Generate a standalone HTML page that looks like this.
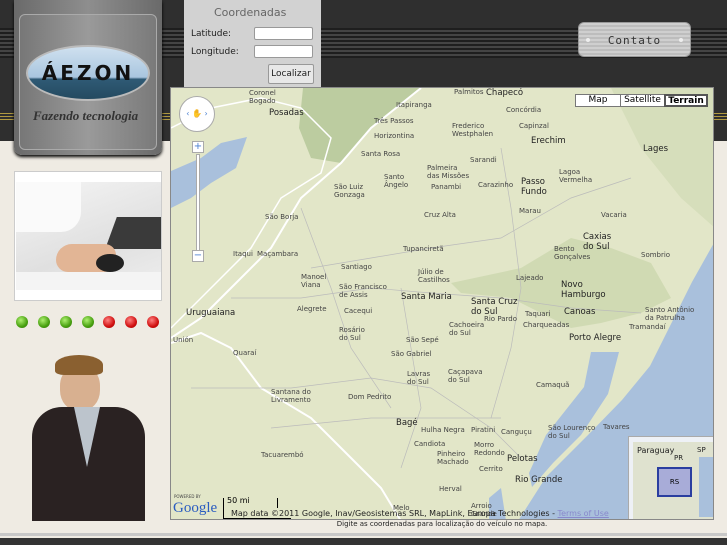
<!DOCTYPE html>
<html><head><meta charset="utf-8"><style>
*{margin:0;padding:0;box-sizing:border-box}
body{width:727px;height:545px;overflow:hidden;position:relative;background:#efebe3;font-family:"DejaVu Sans","Liberation Sans",sans-serif}
.hdr{position:absolute;left:0;top:0;width:727px;height:141px;background:#2f2f2f}
.stripe{position:absolute;left:0;width:727px}
.logo{position:absolute;left:14px;top:0;width:148px;height:155px;background:linear-gradient(90deg,#6a6a6a,#8e8e8e 50%,#6a6a6a);border-radius:0 0 8px 8px;box-shadow:0 2px 3px #000}
.logo .in{position:absolute;left:5px;top:14px;width:138px;height:136px;border:1px solid #aaa;border-radius:6px;background:linear-gradient(90deg,#777,#9a9a9a 50%,#7a7a7a)}
.oval{position:absolute;left:12px;top:45px;width:124px;height:56px;border-radius:50%;border:2px solid #bbb;background:linear-gradient(#cfe0ef,#a9c6df 58%,#2f5a75 62%,#244a60);text-align:center;font:bold 20px "DejaVu Sans",sans-serif;line-height:52px;color:#111;letter-spacing:3px}
.tag{position:absolute;left:19px;top:108px;font:italic bold 13px "Liberation Serif",serif;color:#333}
.coord{position:absolute;left:184px;top:0;width:137px;height:87px;background:#d2d2d2;font-size:9px;color:#222}
.coord input{position:absolute;left:70px;width:59px;height:13px;border:1px solid #999;background:#fff;border-radius:2px}
.btn{position:absolute;top:64px;width:46px;height:20px;border:1px solid #999;background:#e8e8e8;font-size:9px;text-align:center;line-height:18px;border-radius:2px}
.contato{position:absolute;left:578px;top:22px;width:113px;height:35px;border-radius:6px;background:repeating-linear-gradient(#cfcfcf 0 2px,#bdbdbd 2px 4px);border:1px solid #999;text-align:center;font:11px "DejaVu Sans Mono",monospace;line-height:35px;color:#333;letter-spacing:1px}
.contato i{position:absolute;top:15px;width:4px;height:4px;border-radius:50%;background:#eee}
.side{position:absolute;left:14px;top:171px;width:148px;height:130px;background:#fff;border:1px solid #ccc}
.photo{position:absolute;left:1px;top:10px;width:145px;height:108px;background:linear-gradient(160deg,#f5f5f5,#e0e0e0 60%,#eee);overflow:hidden}
.dot{position:absolute;top:316px;width:12px;height:12px;border-radius:50%}
.g{background:radial-gradient(circle at 40% 35%,#aef070,#48a010 60%,#2e7008)}
.r{background:radial-gradient(circle at 40% 35%,#ff8080,#d01010 60%,#900)}
.map{position:absolute;left:170px;top:87px;width:544px;height:433px;background:#e2e6c8;overflow:hidden;border:1px solid #888}
.map span{position:absolute;font-size:7px;color:#444;white-space:nowrap}
.map b{position:absolute;font-size:8.5px;color:#222;font-weight:normal;white-space:nowrap}
.mt{position:absolute;top:6px;height:13px;background:#fff;border:1px solid #777;font-size:9px;text-align:center;line-height:11px}
.foot{position:absolute;left:170px;top:520px;width:544px;text-align:center;font-size:7px;color:#222}
</style></head><body>
<div class="hdr">
 <div class="stripe" style="top:28px;height:30px;background:repeating-linear-gradient(#1e1e1e 0 2px,#444 2px 4px)"></div>
 <div class="stripe" style="top:113px;height:8px;background:repeating-linear-gradient(#b19a40 0 1px,#2f2f2f 1px 3px)"></div>
</div>
<div class="logo"><div class="in"></div><div class="oval">ÁEZON</div><div class="tag">Fazendo tecnologia</div></div>
<div class="coord">
 <div style="position:absolute;left:30px;top:6px;font-size:11px;color:#666">Coordenadas</div>
 <div style="position:absolute;left:7px;top:29px">Latitude:</div><input style="top:27px">
 <div style="position:absolute;left:7px;top:47px">Longitude:</div><input style="top:45px">
 <div class="btn" style="left:84px">Localizar</div>
</div>
<div class="contato"><i style="left:7px"></i>Contato<i style="right:7px"></i></div>
<div class="side"><div class="photo">
 <div style="position:absolute;left:95px;top:35px;width:60px;height:32px;background:#3a3a3a;transform:skewX(-20deg)"></div>
 <div style="position:absolute;left:40px;top:62px;width:60px;height:28px;background:#e2b595;border-radius:20px 14px 15px 15px"></div>
 <div style="position:absolute;left:80px;top:72px;width:28px;height:18px;background:#222;border-radius:50%"></div>
 <div style="position:absolute;left:0;top:0;width:65px;height:50px;background:#fafafa;border-radius:0 0 20px 0"></div>
 <div style="position:absolute;left:0;top:90px;width:145px;height:18px;background:#f4f4f4"></div>
</div></div>
<div class="dot g" style="left:16px"></div><div class="dot g" style="left:38px"></div><div class="dot g" style="left:60px"></div><div class="dot g" style="left:82px"></div>
<div class="dot r" style="left:103px"></div><div class="dot r" style="left:125px"></div><div class="dot r" style="left:147px"></div>
<div style="position:absolute;left:60px;top:365px;width:40px;height:46px;border-radius:45%;background:#d8b090"></div>
<div style="position:absolute;left:55px;top:355px;width:48px;height:20px;border-radius:50% 50% 20% 20%;background:#8a6030"></div>
<div style="position:absolute;left:32px;top:407px;width:113px;height:114px;background:#2a2222;border-radius:30px 30px 0 0"></div>
<div style="position:absolute;left:74px;top:407px;width:26px;height:60px;background:#bcc4cc;clip-path:polygon(0 0,100% 0,50% 100%)"></div>
<div class="map">
 <svg width="544" height="433" style="position:absolute;left:0;top:0">
  <polygon points="132,0 250,0 200,40 170,75 140,70 128,40" fill="#bccca0"/>
  <polygon points="350,180 400,150 440,160 480,175 500,210 470,225 430,235 400,240 370,225 340,210 290,205 280,195" fill="#d0dab3"/>
  <polygon points="440,0 544,0 544,140 510,110 470,60" fill="#d6debb"/>
  <polygon points="0,83 30,70 50,55 76,49 65,80 40,95 20,110 0,120" fill="#a9c0dc"/>
  <polygon points="544,153 521,194 500,236 479,278 451,312 417,347 375,389 347,433 544,433" fill="#a9c0dc"/>
  <polygon points="420,264 448,264 437,306 410,347 382,375 361,399 358,385 375,347 413,299" fill="#a9c0dc"/>
  <polygon points="318,410 330,400 335,433 318,433" fill="#a9c0dc"/>
  <polyline points="0,40 40,20 90,10 130,20 160,50 150,85 110,110 80,160 40,200 0,240" fill="none" stroke="#fff" stroke-width="1.5"/>
  <polyline points="250,0 200,40 170,75 130,110 100,160 60,200 30,230 0,250" fill="none" stroke="#fff" stroke-width="2"/>
  <polyline points="0,255 30,245 60,260 90,300 140,330 180,370 210,400 230,433" fill="none" stroke="#fff" stroke-width="2"/>
  <g fill="none" stroke="#bbb" stroke-width="0.7">
   <polyline points="60,210 130,210 200,200 260,205 330,210 400,220 470,225"/>
   <polyline points="140,180 200,170 260,160 330,150 400,110 460,90"/>
   <polyline points="230,200 240,260 250,320 230,380"/>
   <polyline points="20,300 120,300 200,290 260,300 320,340 350,370"/>
   <polyline points="130,120 160,200 180,260 220,320"/>
   <polyline points="330,60 340,120 350,200 340,260 320,330"/>
   <polyline points="100,340 200,330 260,330 330,330"/>
  </g>
 </svg>
 <div style="position:absolute;left:8px;top:8px;width:36px;height:36px;border-radius:50%;background:#fff;border:1px solid #aaa;color:#4a7fd0;font-size:8px;text-align:center;line-height:34px">‹ ✋ ›</div>
 <div style="position:absolute;left:21px;top:53px;width:12px;height:12px;background:#fff;border:1px solid #aaa;font-size:10px;text-align:center;line-height:10px;color:#4a7fd0">+</div>
 <div style="position:absolute;left:25px;top:66px;width:4px;height:97px;background:#fff;border:1px solid #aaa"></div>
 <div style="position:absolute;left:21px;top:162px;width:12px;height:12px;background:#fff;border:1px solid #aaa;font-size:10px;text-align:center;line-height:10px;color:#4a7fd0">−</div>
 <div class="mt" style="left:404px;width:46px">Map</div><div class="mt" style="left:449px;width:45px">Satellite</div><div class="mt" style="left:493px;width:44px;font-weight:bold;border:2px solid #555">Terrain</div>
 <span style="left:78px;top:1px">Coronel<br>Bogado</span><b style="left:98px;top:20px">Posadas</b>
 <span style="left:225px;top:13px">Itapiranga</span><span style="left:283px;top:0">Palmitos</span><b style="left:315px;top:0">Chapecó</b>
 <span style="left:335px;top:18px">Concórdia</span><span style="left:348px;top:34px">Capinzal</span>
 <span style="left:203px;top:29px">Três Passos</span><span style="left:203px;top:44px">Horizontina</span><span style="left:281px;top:34px">Frederico<br>Westphalen</span>
 <b style="left:360px;top:48px">Erechim</b><b style="left:472px;top:56px">Lages</b>
 <span style="left:190px;top:62px">Santa Rosa</span><span style="left:256px;top:76px">Palmeira<br>das Missões</span><span style="left:299px;top:68px">Sarandi</span>
 <span style="left:163px;top:95px">São Luiz<br>Gonzaga</span><span style="left:213px;top:85px">Santo<br>Ângelo</span><span style="left:260px;top:95px">Panambi</span><span style="left:307px;top:93px">Carazinho</span>
 <b style="left:350px;top:89px">Passo<br>Fundo</b><span style="left:388px;top:80px">Lagoa<br>Vermelha</span><span style="left:348px;top:119px">Marau</span>
 <span style="left:94px;top:125px">São Borja</span><span style="left:253px;top:123px">Cruz Alta</span><span style="left:430px;top:123px">Vacaria</span>
 <span style="left:232px;top:157px">Tupanciretã</span><b style="left:412px;top:144px">Caxias<br>do Sul</b>
 <span style="left:62px;top:162px">Itaqui</span><span style="left:86px;top:162px">Maçambara</span>
 <span style="left:170px;top:175px">Santiago</span><span style="left:247px;top:180px">Júlio de<br>Castilhos</span><span style="left:383px;top:157px">Bento<br>Gonçalves</span><span style="left:470px;top:163px">Sombrio</span>
 <span style="left:130px;top:185px">Manoel<br>Viana</span><span style="left:168px;top:195px">São Francisco<br>de Assis</span><span style="left:345px;top:186px">Lajeado</span>
 <b style="left:390px;top:192px">Novo<br>Hamburgo</b><b style="left:230px;top:204px">Santa Maria</b><b style="left:300px;top:209px">Santa Cruz<br>do Sul</b>
 <b style="left:15px;top:220px">Uruguaiana</b><span style="left:126px;top:217px">Alegrete</span><span style="left:173px;top:219px">Cacequi</span>
 <span style="left:354px;top:222px">Taquari</span><b style="left:393px;top:219px">Canoas</b><span style="left:474px;top:218px">Santo Antônio<br>da Patrulha</span>
 <span style="left:278px;top:233px">Cachoeira<br>do Sul</span><span style="left:313px;top:227px">Rio Pardo</span><span style="left:352px;top:233px">Charqueadas</span>
 <b style="left:398px;top:245px">Porto Alegre</b><span style="left:168px;top:238px">Rosário<br>do Sul</span><span style="left:458px;top:235px">Tramandaí</span>
 <span style="left:235px;top:248px">São Sepé</span><span style="left:2px;top:248px">Unión</span><span style="left:220px;top:262px">São Gabriel</span><span style="left:62px;top:261px">Quaraí</span>
 <span style="left:236px;top:282px">Lavras<br>do Sul</span><span style="left:277px;top:280px">Caçapava<br>do Sul</span><span style="left:365px;top:293px">Camaquã</span>
 <span style="left:100px;top:300px">Santana do<br>Livramento</span><span style="left:177px;top:305px">Dom Pedrito</span>
 <b style="left:225px;top:330px">Bagé</b><span style="left:250px;top:338px">Hulha Negra</span><span style="left:300px;top:338px">Piratini</span><span style="left:330px;top:340px">Canguçu</span>
 <span style="left:377px;top:336px">São Lourenço<br>do Sul</span><span style="left:432px;top:335px">Tavares</span>
 <span style="left:243px;top:352px">Candiota</span><span style="left:303px;top:353px">Morro<br>Redondo</span><span style="left:266px;top:362px">Pinheiro<br>Machado</span>
 <b style="left:336px;top:366px">Pelotas</b><span style="left:308px;top:377px">Cerrito</span><b style="left:344px;top:387px">Rio Grande</b>
 <span style="left:90px;top:363px">Tacuarembó</span><span style="left:268px;top:397px">Herval</span><span style="left:222px;top:416px">Melo</span><span style="left:300px;top:414px">Arroio<br>Grande</span>
 <div style="position:absolute;left:457px;top:348px;width:87px;height:85px;background:#eef1f6;border:1px solid #aaa"><div style="position:absolute;left:4px;top:5px;width:80px;height:78px;background:#dfe2cf"></div><div style="position:absolute;left:70px;top:20px;width:17px;height:60px;background:#a9c0dc"></div><div style="position:absolute;left:28px;top:30px;width:35px;height:30px;background:#a8acd8;border:2px solid #2a3ea0;font-size:7px;text-align:center;line-height:26px">RS</div><span style="left:8px;top:9px;font-size:8px;color:#222">Paraguay</span><span style="left:45px;top:17px;color:#222">PR</span><span style="left:68px;top:9px;color:#222">SP</span></div>
 <div style="position:absolute;left:2px;top:412px;font:15px 'Liberation Serif',serif;color:#2a5cc0">Google</div>
 <span style="left:3px;top:406px;font-size:4px">POWERED BY</span>
 <div style="position:absolute;left:52px;top:410px;width:1px;height:22px;background:#000"></div>
 <div style="position:absolute;left:52px;top:430px;width:68px;height:1px;background:#000"></div>
 <div style="position:absolute;left:106px;top:410px;width:1px;height:10px;background:#000"></div>
 <span style="left:56px;top:408px;font-size:8px;color:#000">50 mi</span>
 <span style="left:60px;top:421px;font-size:8px;color:#222">Map data ©2011 Google, Inav/Geosistemas SRL, MapLink, Europa Technologies - <u style="color:#88c">Terms of Use</u></span>
</div>
<div class="foot">Digite as coordenadas para localização do veículo no mapa.</div>
<div style="position:absolute;left:0;top:533px;width:727px;height:3px;background:#c8c8c8"></div>
<div style="position:absolute;left:0;top:538px;width:727px;height:7px;background:#333"></div>
</body></html>
